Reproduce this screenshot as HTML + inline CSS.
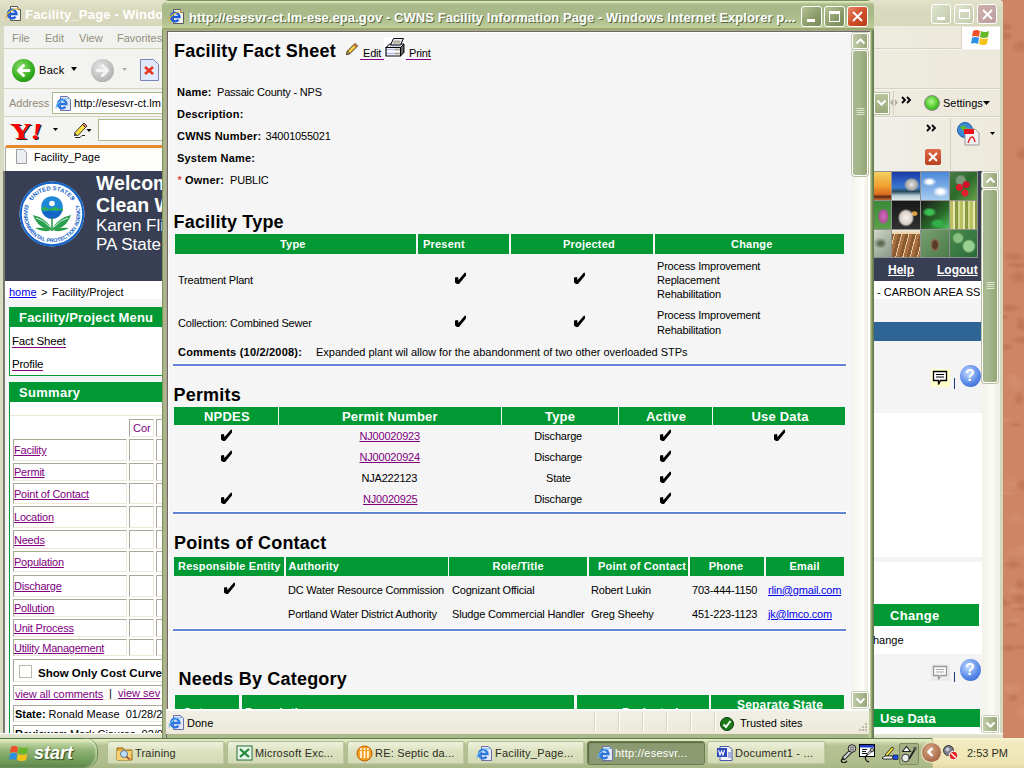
<!DOCTYPE html>
<html><head><meta charset="utf-8">
<style>
*{margin:0;padding:0;box-sizing:border-box}
html,body{width:1024px;height:768px;overflow:hidden}
body{position:relative;background:#cc8464;font-family:"Liberation Sans",sans-serif;font-size:11px;color:#000}
.a{position:absolute}
.t{position:absolute;white-space:nowrap;line-height:1}
.b{font-weight:bold}
#desk{left:1003px;top:0;width:21px;height:738px;background:radial-gradient(ellipse 14px 4px at 7px 606px,rgba(225,160,130,.35),transparent),radial-gradient(ellipse 7px 7px at 19px 485px,rgba(170,95,65,.45),transparent),radial-gradient(ellipse 14px 4px at 15px 265px,rgba(170,95,65,.45),transparent),radial-gradient(ellipse 14px 6px at 15px 553px,rgba(225,160,130,.35),transparent),radial-gradient(ellipse 9px 8px at 20px 154px,rgba(170,95,65,.45),transparent),radial-gradient(ellipse 6px 8px at 16px 399px,rgba(170,95,65,.45),transparent),radial-gradient(ellipse 6px 5px at 5px 605px,rgba(170,95,65,.45),transparent),radial-gradient(ellipse 12px 8px at 8px 484px,rgba(225,160,130,.35),transparent),radial-gradient(ellipse 13px 4px at 12px 590px,rgba(225,160,130,.35),transparent),radial-gradient(ellipse 8px 6px at 3px 36px,rgba(170,95,65,.45),transparent),radial-gradient(ellipse 12px 8px at 8px 688px,rgba(225,160,130,.35),transparent),radial-gradient(ellipse 12px 7px at 13px 519px,rgba(225,160,130,.35),transparent),radial-gradient(ellipse 12px 7px at 17px 599px,rgba(170,95,65,.45),transparent),radial-gradient(ellipse 6px 5px at 10px 698px,rgba(160,85,55,.35),transparent),radial-gradient(ellipse 8px 8px at 21px 712px,rgba(225,160,130,.35),transparent),radial-gradient(ellipse 7px 8px at 17px 585px,rgba(160,85,55,.35),transparent),radial-gradient(ellipse 10px 5px at 6px 648px,rgba(170,95,65,.45),transparent),radial-gradient(ellipse 13px 3px at 2px 493px,rgba(225,160,130,.35),transparent),radial-gradient(ellipse 8px 3px at 2px 420px,rgba(225,160,130,.35),transparent),radial-gradient(ellipse 7px 3px at 13px 425px,rgba(160,85,55,.35),transparent),radial-gradient(ellipse 12px 8px at 19px 46px,rgba(160,85,55,.35),transparent),radial-gradient(ellipse 10px 7px at 10px 564px,rgba(170,95,65,.45),transparent),radial-gradient(ellipse 6px 3px at 1px 317px,rgba(170,95,65,.45),transparent),radial-gradient(ellipse 6px 4px at 19px 548px,rgba(225,160,130,.35),transparent),radial-gradient(ellipse 10px 4px at 9px 625px,rgba(160,85,55,.35),transparent),radial-gradient(ellipse 11px 5px at 1px 347px,rgba(170,95,65,.45),transparent),radial-gradient(ellipse 13px 7px at 12px 385px,rgba(225,160,130,.35),transparent),radial-gradient(ellipse 14px 3px at 20px 609px,rgba(160,85,55,.35),transparent),radial-gradient(ellipse 12px 8px at 16px 277px,rgba(160,85,55,.35),transparent),radial-gradient(ellipse 12px 5px at 7px 308px,rgba(160,85,55,.35),transparent),radial-gradient(ellipse 11px 3px at 9px 561px,rgba(225,160,130,.35),transparent),radial-gradient(ellipse 6px 6px at 18px 322px,rgba(160,85,55,.35),transparent),radial-gradient(ellipse 8px 3px at 18px 647px,rgba(160,85,55,.35),transparent),radial-gradient(ellipse 13px 5px at 20px 340px,rgba(160,85,55,.35),transparent),radial-gradient(ellipse 10px 8px at 11px 623px,rgba(225,160,130,.35),transparent),radial-gradient(ellipse 6px 8px at 0px 603px,rgba(170,95,65,.45),transparent),radial-gradient(ellipse 13px 5px at 11px 257px,rgba(160,85,55,.35),transparent),radial-gradient(ellipse 8px 5px at 19px 327px,rgba(170,95,65,.45),transparent),radial-gradient(ellipse 10px 5px at 10px 378px,rgba(225,160,130,.35),transparent),radial-gradient(ellipse 8px 5px at 3px 27px,rgba(160,85,55,.35),transparent),#cd8565}
#bw{left:0;top:0;width:1003px;height:738px;background:#dcdcc4;border-radius:0 4px 0 0}
#bwtitle{left:0;top:0;width:1003px;height:26px;background:linear-gradient(#e2e3cb,#d8d9bd 40%,#d6d7bb);border-radius:0 4px 0 0}
#popup{left:162px;top:0;width:712px;height:738px;background:linear-gradient(90deg,#7f9060 0,#7f9060 1px,#a4b47f 1px,#adbb88 3px,#b3ae9a 3px,#b3ae9a 4px,#727064 4px,#727064 5px,#a9b789 5px,#a9b789 706px,#c8d49a 708px,#b0c088 709px,#7a9060 710px,#5e7450 712px);border-radius:8px 8px 0 0}
#ptitle{left:162px;top:0;width:712px;height:30px;background:linear-gradient(#7a9060 0,#7a9060 1px,#e0e8c0 1px,#dce6bc 2px,#c0cc9c 3px,#aab988 5px,#a8b888 12px,#b2c290 22px,#bccb96 26px,#c0cc98 27.5px,#98a870 28px,#98a870 30px);border-radius:8px 8px 0 0}
#taskbar{left:0;top:738px;width:1024px;height:30px;background:linear-gradient(#5a7a50 0,#5a7a50 1px,#e4ecc4 1px,#dce6bc 3px,#c8d4a8 5px,#b6c293 8px,#b0bd8c 24px,#a9b686 30px)}
.green{background:#019933;color:#fff;font-weight:bold}
.cell{background:#fff;border:1px solid #ece9d8;border-top-color:#aca899;border-left-color:#aca899}
.tbtn{width:21px;height:21px;border:1px solid #fff;border-radius:3px;background:linear-gradient(135deg,#b8c498,#8a9a68 60%,#7a8a58)}
.sbbtn{width:16px;height:16px;border:1px solid #fff;border-radius:2px;background:linear-gradient(90deg,#c0caa8,#a8b68c 60%,#98a67a);box-shadow:0 0 0 1px #c8ceb4}
.sbthumb{width:16px;border:1px solid #fff;border-radius:3px;background:linear-gradient(90deg,#a8b894,#a4b48a 50%,#92a474);box-shadow:0 0 0 1px #b8c0a0}
.sdiv{top:712px;width:2px;height:19px;border-left:1px solid #d6d2c0;border-right:1px solid #fff}
</style></head><body>
<svg width="0" height="0" style="position:absolute">
<defs>
<symbol id="iedoc" viewBox="0 0 17 17"><path d="M5.5 1.5h7l3 3v11h-10z" fill="#f2f2ee" stroke="#5a5a5a"/><path d="M12.5 1.5v3h3" fill="#fff" stroke="#5a5a5a" stroke-width="0.8"/><path d="M3 9H11.5A4.3 4.3 0 1 0 10.5 11.8" fill="none" stroke="#1d5ad8" stroke-width="2.3"/><path d="M1.2 13.5Q0.5 10 5 6.5T14.5 3.5" fill="none" stroke="#e8b838" stroke-width="1.1"/></symbol>
<symbol id="iedoc2" viewBox="0 0 17 17"><path d="M5.5 1.5h7l3 3v11h-10z" fill="#e4e8f6" stroke="#6a70a8"/><path d="M3 9H11.5A4.3 4.3 0 1 0 10.5 11.8" fill="none" stroke="#2a76e0" stroke-width="2.3"/><path d="M1.2 13.5Q0.5 10 5 6.5T14.5 3.5" fill="none" stroke="#6ab8f0" stroke-width="1.1"/></symbol>
</defs></svg>
<div id="desk" class="a"></div>
<!-- BACKGROUND WINDOW -->
<div id="bw" class="a">
  <div id="bwtitle" class="a"></div>
  <svg class="a" style="left:5px;top:5px" width="17" height="17"><use href="#iedoc"/></svg>
  <div class="t b" style="left:25px;top:8px;font-size:13px;color:#fff;letter-spacing:0.2px">Facility_Page - Windows Internet Explorer</div>
  <!-- title buttons -->
  <div class="a" style="left:931px;top:4px;width:20px;height:20px;border:1px solid #fff;border-radius:3px;background:linear-gradient(135deg,#dfe3cf,#c2cbaa)"><div class="a" style="left:5px;top:12px;width:8px;height:3px;background:#fff"></div></div>
  <div class="a" style="left:954px;top:4px;width:20px;height:20px;border:1px solid #fff;border-radius:3px;background:linear-gradient(135deg,#dfe3cf,#c2cbaa)"><div class="a" style="left:4px;top:4px;width:11px;height:10px;border:1.5px solid #fff;border-top-width:3px"></div></div>
  <div class="a" style="left:977px;top:4px;width:20px;height:20px;border:1px solid #fff;border-radius:3px;background:linear-gradient(135deg,#cdb2b0,#bb9c9a)">
    <svg class="a" style="left:3px;top:3px" width="13" height="13"><path d="M2 2L11 11M11 2L2 11" stroke="#fff" stroke-width="2"/></svg></div>
  <!-- frame body -->
  <div class="a" style="left:4px;top:26px;width:996px;height:708px;background:#f3f3ef"></div>
  <!-- menu bar -->
  <div class="a" style="left:4px;top:26px;width:996px;height:23px;background:linear-gradient(90deg,#f1f3f1 0%,#efefe8 40%,#ede9dc 100%);border-bottom:1px solid #d8d3c0"></div>
  <div class="t" style="left:12px;top:33px;font-size:11px;color:#948e7c">File</div>
  <div class="t" style="left:45px;top:33px;font-size:11px;color:#948e7c">Edit</div>
  <div class="t" style="left:79px;top:33px;font-size:11px;color:#948e7c">View</div>
  <div class="t" style="left:117px;top:33px;font-size:11px;color:#948e7c">Favorites</div>
  <div class="a" style="left:961px;top:27px;width:39px;height:22px;background:#fff;border-left:1px solid #ddd6c4"></div>
  <svg class="a" style="left:971px;top:28px" width="19" height="18" viewBox="0 0 19 18">
    <path d="M2 3q3-2 7 0l-1 6q-4-2-7 0z" fill="#f0502a"/>
    <path d="M10 3q4 2 8 0l-1 6q-4 2-8 0z" fill="#66b82a"/>
    <path d="M1 10q3-2 7 0l-1 6q-4-2-7 0z" fill="#2d8ee5"/>
    <path d="M9 10q4 2 8 0l-1 6q-4 2-8 0z" fill="#f5c21a"/>
  </svg>
  <!-- toolbar -->
  <div class="a" style="left:4px;top:50px;width:996px;height:39px;background:linear-gradient(90deg,#f4f4f2 0%,#f0efe8 50%,#ede9dc 100%);border-bottom:1px solid #d8d3c0"></div>
  <div class="a" style="left:12px;top:59px;width:23px;height:23px;border-radius:50%;background:radial-gradient(circle at 40% 35%,#8fe06a,#2faa1c 60%,#17800e)"></div>
  <svg class="a" style="left:12px;top:59px" width="23" height="23"><path d="M17 11.5H7M11.5 6.5L6.5 11.5L11.5 16.5" stroke="#fff" stroke-width="3" fill="none" stroke-linecap="round" stroke-linejoin="round"/></svg>
  <div class="t" style="left:39px;top:65px;font-size:11px;color:#000;letter-spacing:0.3px">Back</div>
  <svg class="a" style="left:71px;top:67px" width="7" height="4"><path d="M0 0h6l-3 4z" fill="#000"/></svg>
  <div class="a" style="left:91px;top:59px;width:23px;height:23px;border-radius:50%;background:radial-gradient(circle at 40% 35%,#e6e6e6,#b8b8b8 65%,#9a9a9a)"></div>
  <svg class="a" style="left:91px;top:59px" width="23" height="23"><path d="M6 11.5H16M11.5 6.5L16.5 11.5L11.5 16.5" stroke="#f4f4f4" stroke-width="3" fill="none" stroke-linecap="round" stroke-linejoin="round"/></svg>
  <svg class="a" style="left:122px;top:68px" width="6" height="4"><path d="M0 0h5l-2.5 3z" fill="#b0b0a8"/></svg>
  <svg class="a" style="left:139px;top:58px" width="21" height="24"><path d="M1.5 1.5h13l5 5v16h-18z" fill="#dfe9fb" stroke="#7a86b8"/><path d="M6 9l8 7M14 9l-8 7" stroke="#e8341c" stroke-width="2.6"/></svg>
  <!-- address row -->
  <div class="a" style="left:4px;top:90px;width:996px;height:27px;background:linear-gradient(90deg,#f4f4f2 0%,#f0efe8 50%,#ede9dc 100%);border-bottom:1px solid #d8d3c0"></div>
  <div class="t" style="left:9px;top:98px;font-size:11px;color:#8f8a78">Address</div>
  <div class="a" style="left:52px;top:92px;width:120px;height:22px;background:#fff;border:1px solid #a9ba8c"></div>
  <svg class="a" style="left:55px;top:95px" width="17" height="17"><use href="#iedoc2"/></svg>
  <div class="t" style="left:74px;top:98px;font-size:11px;color:#000">http://esesvr-ct.lm</div>
  <!-- right side of address row -->
  <div class="a" style="left:874px;top:93px;width:15px;height:21px;background:linear-gradient(#b9c69d,#9aa878);border:1px solid #fff;outline:1px solid #b8c0a0"></div>
  <svg class="a" style="left:876px;top:99px" width="11" height="8"><path d="M1.5 1.5L5.5 5.5L9.5 1.5" stroke="#fff" stroke-width="2" fill="none"/></svg>
  <svg class="a" style="left:889px;top:98px" width="10" height="9"><path d="M4 1L1 4.5L4 8z M6 1L9 4.5L6 8z" fill="#b0b0a8"/></svg>
  <div class="a" style="left:893px;top:91px;width:1px;height:24px;background:#d6d0bc"></div>
  <svg class="a" style="left:901px;top:96px" width="12" height="8"><path d="M1 1L4 4L1 7M6 1L9 4L6 7" stroke="#000" stroke-width="1.8" fill="none"/></svg>
  <div class="a" style="left:924px;top:95px;width:16px;height:16px;border-radius:50%;background:radial-gradient(circle at 45% 40%,#b8f890,#4cc82a 55%,#2a9a14);border:1.5px solid #8a8a8a"></div>
  <div class="t" style="left:943px;top:98px;font-size:11px;color:#000">Settings</div>
  <svg class="a" style="left:983px;top:101px" width="8" height="5"><path d="M0 0h7l-3.5 4z" fill="#000"/></svg>
  <!-- yahoo row -->
  <div class="a" style="left:4px;top:118px;width:996px;height:27px;background:linear-gradient(90deg,#f4f4f2 0%,#f0efe8 50%,#ede9dc 100%)"></div>
  <div class="t b" style="left:10px;top:119px;font-size:24px;color:#ff0000;font-family:'Liberation Serif',serif;letter-spacing:-1px;text-shadow:1px 1px 0 #222;transform:scaleX(1.25);transform-origin:0 0">Y<i>!</i></div>
  <svg class="a" style="left:53px;top:128px" width="6" height="4"><path d="M0 0h5l-2.5 3z" fill="#000"/></svg>
  <svg class="a" style="left:72px;top:121px" width="20" height="18"><path d="M2.5 12L10.5 3.5l3 3-8 8.5z" fill="#fce040" stroke="#222" stroke-width="0.9"/><path d="M10.5 3.5l1.5-1.5 3 3-1.5 1.5z" fill="#f08060" stroke="#222" stroke-width="0.9"/><path d="M2.5 12l-0.5 3 3-0.5z" fill="#222"/><path d="M3 16.5h5l2-2h3" stroke="#222" stroke-width="1" fill="none"/><path d="M14.5 8h5l-2.5 3z" fill="#000"/></svg>
  <div class="a" style="left:98px;top:119px;width:70px;height:22px;background:#fff;border:1px solid #a9ba8c"></div>
  <!-- right side of yahoo/tab rows -->
  <div class="a" style="left:874px;top:118px;width:126px;height:53px;background:linear-gradient(90deg,#f0efe8 0%,#ede9dc 100%)"></div>
  <div class="a" style="left:950px;top:118px;width:1px;height:52px;background:#fff;border-left:1px solid #d6d0bc"></div>
  <svg class="a" style="left:926px;top:124px" width="11" height="8"><path d="M1 1L4 4L1 7M6 1L9 4L6 7" stroke="#000" stroke-width="1.8" fill="none"/></svg>
  <svg class="a" style="left:956px;top:121px" width="26" height="25"><circle cx="9" cy="9" r="7.5" fill="#3a8ad8" stroke="#1e5aa0"/><path d="M4 6q3-3 6 0t4 4q-3 3-6 1z" fill="#58b830"/><path d="M9 8h10l4 4v12H9z" fill="#f0f0f0" stroke="#999"/><rect x="8" y="8" width="10" height="5" fill="#e8141c"/><path d="M12 22q2-6 4-6t3 5" stroke="#e8141c" stroke-width="1.3" fill="none"/></svg>
  <svg class="a" style="left:990px;top:132px" width="6" height="4"><path d="M0 0h5l-2.5 3z" fill="#000"/></svg>
  <!-- tab strip -->
  <div class="a" style="left:4px;top:145px;width:870px;height:26px;background:linear-gradient(90deg,#f0efe8 0%,#ede9dc 100%)"></div>
  <div class="a" style="left:5px;top:145px;width:170px;height:26px;background:#fdfdfb;border-top:3px solid #e58a2e;border-left:1px solid #aaa;border-radius:3px 3px 0 0"></div>
  <svg class="a" style="left:15px;top:148px" width="13" height="17"><path d="M1.5 1.5h7l3 3v11h-10z" fill="#eceef2" stroke="#9a9ca4"/></svg>
  <div class="t" style="left:34px;top:152px;font-size:11px;color:#000">Facility_Page</div>
  <div class="a" style="left:925px;top:149px;width:16px;height:16px;background:linear-gradient(#e06a48,#b8401e);border-radius:2px"></div>
  <svg class="a" style="left:925px;top:149px" width="16" height="16"><path d="M4 4L12 12M12 4L4 12" stroke="#fff" stroke-width="2.2"/></svg>
  <div class="a" style="left:950px;top:145px;width:1px;height:25px;background:#fff;border-left:1px solid #d6d0bc"></div>
  <!-- page content -->
  <div class="a" style="left:5px;top:171px;width:977px;height:563px;background:#f4f4f4"></div>
  <div class="a" style="left:5px;top:171px;width:977px;height:110px;background:#383f54"></div>
  <!-- EPA logo -->
  <svg class="a" style="left:19px;top:181px" width="66" height="66" viewBox="0 0 66 66">
    <defs><path id="epaTop" d="M10.01 26.84 A23.8 23.8 0 0 1 55.99 26.84"/><path id="epaBot" d="M7.35 21.04 A28.3 28.3 0 1 0 58.65 21.04"/></defs>
    <circle cx="33" cy="33" r="32.5" fill="#fff"/>
    <circle cx="33" cy="33" r="31.3" fill="none" stroke="#1565c8" stroke-width="2.2"/>
    <text font-family="Liberation Sans" font-weight="bold" font-size="5.8" fill="#1565c8" letter-spacing="0.1"><textPath href="#epaTop" startOffset="50%" text-anchor="middle">UNITED STATES</textPath></text>
    <text font-family="Liberation Sans" font-weight="bold" font-size="5.4" fill="#1565c8" letter-spacing="0"><textPath href="#epaBot" startOffset="50%" text-anchor="middle">ENVIRONMENTAL PROTECTION AGENCY</textPath></text>
    <circle cx="11.5" cy="17.5" r="1" fill="#1565c8"/><circle cx="54.5" cy="17.5" r="1" fill="#1565c8"/>
    <circle cx="33" cy="26" r="10.8" fill="#1e88d8"/>
    <path d="M22.3 27q2.7-2 5.4 0t5.4 0 5.4 0 5.4 0v3q-2.7 2-5.4 0t-5.4 0-5.4 0-5.4 0z" fill="#2fb050"/>
    <path d="M22.6 30q2.6 1.5 5.2 0t5.2 0 5.2 0 5.2 0A10.8 10.8 0 0 1 22.6 30z" fill="#1565c8"/>
    <circle cx="33" cy="22.5" r="2.8" fill="#fff"/>
    <path d="M33 37v13" stroke="#2a9a48" stroke-width="1.6"/>
    <path d="M33 49Q28 37 14 34Q19 48 33 49z" fill="#2aa050"/><path d="M31 46Q25 39 17 37" stroke="#fff" stroke-width="0.8" fill="none"/>
    <path d="M33 49Q38 37 52 34Q47 48 33 49z" fill="#2aa050"/><path d="M35 46Q41 39 49 37" stroke="#fff" stroke-width="0.8" fill="none"/>
    <path d="M33 49Q24 46 16 47Q24 52 33 49zM33 49Q42 46 50 47Q42 52 33 49z" fill="#2a9a48"/>
  </svg>
  <div class="t b" style="left:96px;top:174px;font-size:19.5px;color:#fff">Welcome</div>
  <div class="t b" style="left:96px;top:195.5px;font-size:19.5px;color:#fff">Clean W</div>
  <div class="t" style="left:96px;top:217px;font-size:17px;color:#fff">Karen Fli</div>
  <div class="t" style="left:96px;top:235.5px;font-size:17px;color:#fff">PA State</div>
  <!-- breadcrumb -->
  <div class="a" style="left:5px;top:281px;width:977px;height:18px;background:#fff"></div>
  <div class="t" style="left:9px;top:287px;font-size:11px;color:#0000ee;text-decoration:underline">home</div>
  <div class="t" style="left:41px;top:287px;font-size:11px;color:#000">&gt;</div>
  <div class="t" style="left:52px;top:287px;font-size:11px;color:#000">Facility/Project</div>
  <!-- left menu box -->
  <div class="a" style="left:9px;top:307px;width:160px;height:69px;background:#fff;border:1px solid #019933"></div>
  <div class="a green" style="left:9px;top:307px;width:160px;height:20px"></div>
  <div class="t b" style="left:19px;top:311px;font-size:13px;color:#fff;letter-spacing:0.2px">Facility/Project Menu</div>
  <div class="t" style="left:12px;top:335.5px;font-size:11.5px;color:#000;border-bottom:1px solid #800080;padding-bottom:0px;letter-spacing:-0.2px">Fact Sheet</div>
  <div class="t" style="left:12px;top:358.5px;font-size:11.5px;color:#000;border-bottom:1px solid #800080;letter-spacing:-0.2px">Profile</div>
  <!-- summary box -->
  <div class="a" style="left:9px;top:382px;width:160px;height:352px;background:#fff;border-left:1px solid #019933"></div>
  <div class="a green" style="left:9px;top:382px;width:160px;height:20px"></div>
  <div class="t b" style="left:19px;top:386px;font-size:13px;color:#fff;letter-spacing:0.3px">Summary</div>
  <div class="a" style="left:10px;top:415px;width:160px;height:1px;background:#ece9d8"></div>
  <div class="a cell" style="left:129px;top:419px;width:25px;height:18px"></div>
  <div class="t" style="left:133px;top:423px;font-size:11px;color:#800080">Cor</div>
  <div class="a cell" style="left:156px;top:419px;width:20px;height:18px"></div>
  <div class="a cell" style="left:13px;top:439px;width:114px;height:22px"></div>
  <div class="a cell" style="left:129px;top:439px;width:25px;height:22px"></div>
  <div class="a cell" style="left:156px;top:439px;width:20px;height:22px"></div>
  <div class="t" style="left:14px;top:445px;font-size:11px;color:#800080;text-decoration:underline;letter-spacing:-0.22px">Facility</div>
  <div class="a cell" style="left:13px;top:463px;width:114px;height:18px"></div>
  <div class="a cell" style="left:129px;top:463px;width:25px;height:18px"></div>
  <div class="a cell" style="left:156px;top:463px;width:20px;height:18px"></div>
  <div class="t" style="left:14px;top:467px;font-size:11px;color:#800080;text-decoration:underline;letter-spacing:-0.22px">Permit</div>
  <div class="a cell" style="left:13px;top:483px;width:114px;height:21px"></div>
  <div class="a cell" style="left:129px;top:483px;width:25px;height:21px"></div>
  <div class="a cell" style="left:156px;top:483px;width:20px;height:21px"></div>
  <div class="t" style="left:14px;top:489px;font-size:11px;color:#800080;text-decoration:underline;letter-spacing:-0.22px">Point of Contact</div>
  <div class="a cell" style="left:13px;top:506px;width:114px;height:22px"></div>
  <div class="a cell" style="left:129px;top:506px;width:25px;height:22px"></div>
  <div class="a cell" style="left:156px;top:506px;width:20px;height:22px"></div>
  <div class="t" style="left:14px;top:512px;font-size:11px;color:#800080;text-decoration:underline;letter-spacing:-0.22px">Location</div>
  <div class="a cell" style="left:13px;top:530px;width:114px;height:19px"></div>
  <div class="a cell" style="left:129px;top:530px;width:25px;height:19px"></div>
  <div class="a cell" style="left:156px;top:530px;width:20px;height:19px"></div>
  <div class="t" style="left:14px;top:535px;font-size:11px;color:#800080;text-decoration:underline;letter-spacing:-0.22px">Needs</div>
  <div class="a cell" style="left:13px;top:551px;width:114px;height:21px"></div>
  <div class="a cell" style="left:129px;top:551px;width:25px;height:21px"></div>
  <div class="a cell" style="left:156px;top:551px;width:20px;height:21px"></div>
  <div class="t" style="left:14px;top:557px;font-size:11px;color:#800080;text-decoration:underline;letter-spacing:-0.22px">Population</div>
  <div class="a cell" style="left:13px;top:575px;width:114px;height:22px"></div>
  <div class="a cell" style="left:129px;top:575px;width:25px;height:22px"></div>
  <div class="a cell" style="left:156px;top:575px;width:20px;height:22px"></div>
  <div class="t" style="left:14px;top:581px;font-size:11px;color:#800080;text-decoration:underline;letter-spacing:-0.22px">Discharge</div>
  <div class="a cell" style="left:13px;top:599px;width:114px;height:18px"></div>
  <div class="a cell" style="left:129px;top:599px;width:25px;height:18px"></div>
  <div class="a cell" style="left:156px;top:599px;width:20px;height:18px"></div>
  <div class="t" style="left:14px;top:603px;font-size:11px;color:#800080;text-decoration:underline;letter-spacing:-0.22px">Pollution</div>
  <div class="a cell" style="left:13px;top:619px;width:114px;height:18px"></div>
  <div class="a cell" style="left:129px;top:619px;width:25px;height:18px"></div>
  <div class="a cell" style="left:156px;top:619px;width:20px;height:18px"></div>
  <div class="t" style="left:14px;top:623px;font-size:11px;color:#800080;text-decoration:underline;letter-spacing:-0.22px">Unit Process</div>
  <div class="a cell" style="left:13px;top:639px;width:114px;height:17px"></div>
  <div class="a cell" style="left:129px;top:639px;width:25px;height:17px"></div>
  <div class="a cell" style="left:156px;top:639px;width:20px;height:17px"></div>
  <div class="t" style="left:14px;top:643px;font-size:11px;color:#800080;text-decoration:underline;letter-spacing:-0.22px">Utility Management</div>
  <div class="a cell" style="left:13px;top:659px;width:160px;height:23px"></div>
  <div class="a" style="left:19px;top:665px;width:13px;height:13px;border:1px solid #b9b9ad;background:#fff"></div>
  <div class="t b" style="left:38px;top:667.5px;font-size:11.5px;color:#000;letter-spacing:0px">Show Only Cost Curve</div>
  <div class="a cell" style="left:13px;top:685px;width:160px;height:15px"></div>
  <div class="t" style="left:15px;top:688.5px;font-size:11px;color:#800080;text-decoration:underline;letter-spacing:-0.1px">view all comments</div>
  <div class="t" style="left:109px;top:688px;font-size:11px;color:#000">|</div>
  <div class="t" style="left:118px;top:688px;font-size:11px;color:#800080;text-decoration:underline">view sev</div>
  <div class="a cell" style="left:13px;top:705px;width:160px;height:17px"></div>
  <div class="t" style="left:15px;top:709px;font-size:11px;color:#000"><b>State:</b> Ronald Mease&nbsp; 01/28/20</div>
  <div class="a cell" style="left:13px;top:725px;width:160px;height:17px"></div>
  <div class="t" style="left:15px;top:729px;font-size:11px;color:#000"><b>Reviewer:</b> Mark Ciauros&nbsp; 02/0</div>
  <!-- right side page items -->
  <div class="a" style="left:874px;top:171px;width:104px;height:87px;background:#909090"></div>
  <div class="a" style="left:874px;top:172px;width:17px;height:28px;background:linear-gradient(#f2d060 0%,#f0a030 50%,#d86a20 80%,#5a2a10 88%,#c86a30 100%)"></div>
  <div class="a" style="left:892px;top:172px;width:28px;height:28px;background:radial-gradient(ellipse 10px 9px at 70% 45%,#e8e8e8 0%,#a0a0a0 60%,transparent 75%),linear-gradient(#1a3aa8 0%,#3a78d0 55%,#2a4a5a 70%,#b8d0d8 85%,#e0e8e8 100%)"></div>
  <div class="a" style="left:921px;top:172px;width:28px;height:28px;background:radial-gradient(ellipse 8px 5px at 30% 35%,#fff 30%,transparent 90%),radial-gradient(ellipse 9px 6px at 70% 70%,#fff 30%,transparent 90%),linear-gradient(#4a88d8,#a8ccf0)"></div>
  <div class="a" style="left:950px;top:172px;width:27px;height:28px;background:radial-gradient(circle at 35% 55%,#e01a2a 0 3px,transparent 4px),radial-gradient(circle at 60% 45%,#d0102a 0 3px,transparent 4px),radial-gradient(circle at 55% 75%,#e0202a 0 3px,transparent 4px),radial-gradient(circle at 40% 30%,#7a9a7a 0 4px,transparent 6px),linear-gradient(135deg,#4a7a4a,#2a6a2a 50%,#6aa04a)"></div>
  <div class="a" style="left:874px;top:201px;width:17px;height:28px;background:radial-gradient(ellipse 7px 10px at 55% 55%,#d070c0 0%,#b0509a 60%,transparent 80%),linear-gradient(#3a8a3a,#5aa04a)"></div>
  <div class="a" style="left:892px;top:201px;width:28px;height:28px;background:radial-gradient(ellipse 11px 12px at 50% 60%,#f8f4f0 0%,#d8d0c8 55%,transparent 75%),radial-gradient(ellipse 4px 3px at 80% 45%,#e0a040 60%,transparent 90%),linear-gradient(#181818,#303030)"></div>
  <div class="a" style="left:921px;top:201px;width:28px;height:28px;background:radial-gradient(ellipse 9px 6px at 30% 40%,#3ac050 40%,transparent 80%),radial-gradient(ellipse 10px 6px at 60% 80%,#30b048 40%,transparent 80%),linear-gradient(135deg,#1a1a1a,#2a6a2a 60%,#50c060)"></div>
  <div class="a" style="left:950px;top:201px;width:27px;height:28px;background:repeating-linear-gradient(90deg,#b8c060 0 3px,#e8e8b0 3px 5px,#889840 5px 8px,#d0d890 8px 10px)"></div>
  <div class="a" style="left:874px;top:230px;width:17px;height:27px;background:radial-gradient(ellipse 9px 7px at 40% 50%,#5a6a50 20%,#a8b0a0 70%,transparent 90%),linear-gradient(135deg,#d0d8c8,#8a9888)"></div>
  <div class="a" style="left:892px;top:230px;width:28px;height:27px;background:linear-gradient(#f0e8d8 0%,#e8d0a0 15%,transparent 16%),repeating-linear-gradient(105deg,#8a5a30 0 3px,#e8c8a0 3px 4px,#a87040 4px 7px)"></div>
  <div class="a" style="left:921px;top:230px;width:28px;height:27px;background:radial-gradient(ellipse 6px 9px at 50% 55%,#5a3a2a 40%,#8a6a4a 60%,transparent 80%),linear-gradient(135deg,#7aa070,#4a7a48)"></div>
  <div class="a" style="left:950px;top:230px;width:27px;height:27px;background:radial-gradient(circle at 30% 30%,#8ac080 0 4px,transparent 6px),radial-gradient(circle at 70% 60%,#9ad090 0 5px,transparent 7px),linear-gradient(135deg,#4a8a4a,#2a6a3a)"></div>
  <div class="t b" style="left:888px;top:263.5px;font-size:12px;color:#fff;text-decoration:underline">Help</div>
  <div class="t b" style="left:937px;top:263.5px;font-size:12px;color:#fff;text-decoration:underline">Logout</div>
  <div class="a" style="left:874px;top:285px;width:104px;height:14px;background:#fff"></div>
  <div class="t" style="left:877px;top:287px;font-size:11px;color:#000">- CARBON AREA SS</div>
  <div class="a" style="left:874px;top:322px;width:108px;height:19px;background:#2f6497"></div>
  <div class="a" style="left:874px;top:413px;width:108px;height:144px;background:#fff"></div>
  <div class="a" style="left:874px;top:562px;width:108px;height:92px;background:#fff"></div>
  <div class="a green" style="left:874px;top:604px;width:105px;height:22px"></div>
  <div class="t b" style="left:890px;top:609px;font-size:13px;color:#fff;letter-spacing:0.3px">Change</div>
  <div class="t" style="left:873px;top:634.5px;font-size:11px;color:#000">hange</div>
  <div class="a green" style="left:874px;top:709px;width:106px;height:18px"></div>
  <div class="t b" style="left:880px;top:712px;font-size:13px;color:#fff">Use Data</div>
  <div class="a" style="left:874px;top:727px;width:108px;height:7px;background:#fff"></div>
  <div class="a" style="left:931px;top:369px;width:19px;height:18px;background:#ffffcc"></div>
  <svg class="a" style="left:932px;top:370px" width="17" height="17"><path d="M1.5 1.5h13v9h-6l-2 4v-4h-5z" fill="#fff" stroke="#000" stroke-width="1.3"/><path d="M4 4.5h8M4 7h8" stroke="#000" stroke-width="1"/></svg>
  <div class="a" style="left:954px;top:378px;width:1px;height:11px;background:#1a3a7a"></div>
  <div class="a" style="left:960px;top:365px;width:21px;height:22px;border-radius:50%;background:radial-gradient(circle at 40% 35%,#c8dcff,#5a8ae8 55%,#2a5ac8)"></div>
  <div class="t b" style="left:965px;top:368px;font-size:16px;color:#fff">?</div>
  <div class="a" style="left:931px;top:664px;width:19px;height:17px;background:#ebebeb"></div>
  <svg class="a" style="left:932px;top:665px" width="17" height="17"><path d="M1.5 1.5h13v9h-6l-2 4v-4h-5z" fill="#f8f8f8" stroke="#9a9a9a" stroke-width="1.3"/><path d="M4 4.5h8M4 7h8" stroke="#aaa" stroke-width="1"/></svg>
  <div class="a" style="left:954px;top:672px;width:1px;height:10px;background:#1a3a7a"></div>
  <div class="a" style="left:960px;top:659px;width:21px;height:22px;border-radius:50%;background:radial-gradient(circle at 40% 35%,#c8dcff,#5a8ae8 55%,#2a5ac8)"></div>
  <div class="t b" style="left:965px;top:662px;font-size:16px;color:#fff">?</div>
  <!-- right scrollbar -->
  <div class="a" style="left:982px;top:172px;width:17px;height:562px;background:linear-gradient(90deg,#f3f2ea,#fbfbf7 60%,#eeede4)"></div>
  <div class="a sbbtn" style="left:982px;top:172px"><svg width="15" height="15"><path d="M3.5 9.5L7.5 5.5L11.5 9.5" stroke="#fff" stroke-width="2" fill="none"/></svg></div>
  <div class="a sbthumb" style="left:982px;top:189px;height:194px"></div>
  <svg class="a" style="left:986px;top:281px" width="9" height="9"><path d="M0.5 1.5h8M0.5 3.5h8M0.5 5.5h8M0.5 7.5h8" stroke="#dfe6cf" stroke-width="1"/></svg>
  <div class="a sbbtn" style="left:982px;top:716px"><svg width="15" height="15"><path d="M3.5 5.5L7.5 9.5L11.5 5.5" stroke="#fff" stroke-width="2" fill="none"/></svg></div>
  <!-- right frame border -->
  <div class="a" style="left:1000px;top:26px;width:3px;height:712px;background:#d3d6bb"></div>
  <div class="a" style="left:0;top:26px;width:4px;height:712px;background:#d8dbc2"></div>
  <div class="a" style="left:3px;top:171px;width:2px;height:562px;background:#7a7a70"></div>
  <div class="a" style="left:0;top:733px;width:1003px;height:5px;background:linear-gradient(#fff 0,#fff 1px,#e4e6d2 1px,#dcdfc6 5px)"></div>
</div>
<!-- POPUP WINDOW -->
<div id="popup" class="a"></div>
<div id="ptitle" class="a"></div>
<svg class="a" style="left:168px;top:8px" width="17" height="17"><use href="#iedoc"/></svg>
<div class="t b" style="left:189px;top:11px;font-size:13px;color:#fff;text-shadow:1px 1px 0 #5a6840;letter-spacing:0.08px">http://esesvr-ct.lm-ese.epa.gov - CWNS Facility Information Page - Windows Internet Explorer p...</div>
<div class="a tbtn" style="left:801px;top:6px"><div class="a" style="left:5px;top:12px;width:8px;height:3px;background:#fff"></div></div>
<div class="a tbtn" style="left:824px;top:6px"><div class="a" style="left:4px;top:4px;width:11px;height:11px;border:1.5px solid #fff;border-top-width:3px"></div></div>
<div class="a tbtn" style="left:847px;top:6px;background:linear-gradient(135deg,#e8886a,#d0502a 50%,#b83a18)"><svg class="a" style="left:3px;top:3px" width="13" height="13"><path d="M2 2L11 11M11 2L2 11" stroke="#fff" stroke-width="2"/></svg></div>
<div class="a" style="left:166px;top:30px;width:704px;height:680px;background:#aca690"></div>
<div class="a" style="left:167px;top:31px;width:703px;height:679px;background:#6e6c60"></div>
<div id="pc" class="a" style="left:168px;top:32px;width:684px;height:677px;background:#f5f5f5;overflow:hidden;box-shadow:inset 1px 1px 0 #fff">
<div class="t" style="left:6.0px;top:10.1px;font-size:18px;font-weight:bold;color:#000;letter-spacing:0.2px;">Facility Fact Sheet</div>
<svg class="a" style="left:177px;top:10px" width="14" height="14" viewBox="0 0 14 14"><path d="M1.5 12.5L2.5 9L10 1.5L12.5 4L5 11.5z" fill="#f8d048" stroke="#3a2a10" stroke-width="1"/><path d="M1.5 12.5L2.5 9L5 11.5z" fill="#e8c8a0" stroke="#3a2a10" stroke-width="0.8"/><path d="M9 2.5L11.5 5" stroke="#c06030" stroke-width="1.3"/></svg>
<div class="t" style="left:195.0px;top:15.7px;font-size:11px;color:#000;letter-spacing:-0.2px;">Edit</div>
<div class="a" style="left:192px;top:27px;width:24px;height:1px;background:#800080;"></div>
<svg class="a" style="left:216px;top:5px" width="22" height="21" viewBox="0 0 22 21"><rect x="0" y="0" width="22" height="21" fill="#fff"/><path d="M2 10.5L5.5 7H20L16.5 10.5z" fill="#d8d8e8" stroke="#000" stroke-width="1"/><path d="M6.5 8L9.5 1.5H19.5L16.5 8z" fill="#f0f0ff" stroke="#000" stroke-width="1"/><path d="M9.5 4.2h7M9 6h7" stroke="#8a8460" stroke-width="1"/><path d="M2 10.5H16.5V19H2z" fill="#fff" stroke="#000" stroke-width="1.2"/><path d="M3 12.5h12.5M3 16.5h12.5" stroke="#b8b8f0" stroke-width="1.5"/><path d="M11 12.5h4.5M11 16.5h4.5" stroke="#a8a080" stroke-width="1.5"/><path d="M16.5 10.5L20 7V15.5L16.5 19z" fill="#666" stroke="#000" stroke-width="1"/></svg>
<div class="t" style="left:241.0px;top:15.7px;font-size:11px;color:#000;letter-spacing:-0.2px;">Print</div>
<div class="a" style="left:238px;top:27px;width:25px;height:1px;background:#800080;"></div>
<div class="t" style="left:9.0px;top:54.7px;font-size:11px;font-weight:bold;color:#000;letter-spacing:0.2px;">Name:</div>
<div class="t" style="left:49.0px;top:54.7px;font-size:11px;color:#000;letter-spacing:-0.2px;">Passaic County - NPS</div>
<div class="t" style="left:9.0px;top:76.7px;font-size:11px;font-weight:bold;color:#000;letter-spacing:0.2px;">Description:</div>
<div class="t" style="left:9.0px;top:98.7px;font-size:11px;font-weight:bold;color:#000;letter-spacing:0.2px;">CWNS Number:</div>
<div class="t" style="left:97.5px;top:98.7px;font-size:11px;color:#000;letter-spacing:-0.2px;">34001055021</div>
<div class="t" style="left:9.0px;top:120.7px;font-size:11px;font-weight:bold;color:#000;letter-spacing:0.2px;">System Name:</div>
<div class="t" style="left:9.5px;top:142.7px;font-size:11px;color:#e00000;letter-spacing:-0.2px;">*</div>
<div class="t" style="left:17.0px;top:142.7px;font-size:11px;font-weight:bold;color:#000;letter-spacing:0.2px;">Owner:</div>
<div class="t" style="left:62.0px;top:142.7px;font-size:11px;color:#000;letter-spacing:-0.2px;">PUBLIC</div>
<div class="t" style="left:5.5px;top:180.8px;font-size:18px;font-weight:bold;color:#000;letter-spacing:0.2px;">Facility Type</div>
<div class="a" style="left:7px;top:202px;width:241px;height:20px;background:#019933;"></div>
<div class="a" style="left:250px;top:202px;width:91px;height:20px;background:#019933;"></div>
<div class="a" style="left:343px;top:202px;width:142px;height:20px;background:#019933;"></div>
<div class="a" style="left:487px;top:202px;width:189px;height:20px;background:#019933;"></div>
<div class="t" style="left:112.0px;top:206.7px;font-size:11px;font-weight:bold;color:#fff;letter-spacing:0.2px;">Type</div>
<div class="t" style="left:255.0px;top:206.7px;font-size:11px;font-weight:bold;color:#fff;letter-spacing:0.2px;">Present</div>
<div class="t" style="left:395.0px;top:206.7px;font-size:11px;font-weight:bold;color:#fff;letter-spacing:0.2px;">Projected</div>
<div class="t" style="left:563.0px;top:206.7px;font-size:11px;font-weight:bold;color:#fff;letter-spacing:0.2px;">Change</div>
<div class="t" style="left:10.0px;top:242.7px;font-size:11px;color:#000;letter-spacing:-0.2px;">Treatment Plant</div>
<svg class="a" style="left:286px;top:240px" width="13" height="13" viewBox="0 0 13 13"><path d="M1 5.5L4 5L4.5 8L11 0.5L12 1L12 3.5L5 12L3 12L1 10.5Z" fill="#000"/></svg>
<svg class="a" style="left:405px;top:240px" width="13" height="13" viewBox="0 0 13 13"><path d="M1 5.5L4 5L4.5 8L11 0.5L12 1L12 3.5L5 12L3 12L1 10.5Z" fill="#000"/></svg>
<div class="t" style="left:489.0px;top:228.7px;font-size:11px;color:#000;letter-spacing:-0.2px;">Process Improvement</div>
<div class="t" style="left:489.0px;top:242.7px;font-size:11px;color:#000;letter-spacing:-0.2px;">Replacement</div>
<div class="t" style="left:489.0px;top:256.7px;font-size:11px;color:#000;letter-spacing:-0.2px;">Rehabilitation</div>
<div class="t" style="left:10.0px;top:285.7px;font-size:11px;color:#000;letter-spacing:-0.2px;">Collection: Combined Sewer</div>
<svg class="a" style="left:286px;top:283px" width="13" height="13" viewBox="0 0 13 13"><path d="M1 5.5L4 5L4.5 8L11 0.5L12 1L12 3.5L5 12L3 12L1 10.5Z" fill="#000"/></svg>
<svg class="a" style="left:405px;top:283px" width="13" height="13" viewBox="0 0 13 13"><path d="M1 5.5L4 5L4.5 8L11 0.5L12 1L12 3.5L5 12L3 12L1 10.5Z" fill="#000"/></svg>
<div class="t" style="left:489.0px;top:278.2px;font-size:11px;color:#000;letter-spacing:-0.2px;">Process Improvement</div>
<div class="t" style="left:489.0px;top:292.7px;font-size:11px;color:#000;letter-spacing:-0.2px;">Rehabilitation</div>
<div class="t" style="left:10.0px;top:314.7px;font-size:11px;font-weight:bold;color:#000;letter-spacing:0.2px;">Comments (10/2/2008):</div>
<div class="t" style="left:148.0px;top:314.7px;font-size:11px;color:#000;letter-spacing:-0.2px;letter-spacing:-0.02px">Expanded plant wil allow for the abandonment of two other overloaded STPs</div>
<div class="a" style="left:5px;top:331px;width:674px;height:4px;background:#fffff6;"></div>
<div class="a" style="left:5px;top:332px;width:673px;height:2px;background:#6383d9;"></div>
<div class="t" style="left:5.5px;top:354.3px;font-size:18px;font-weight:bold;color:#000;letter-spacing:0.2px;">Permits</div>
<div class="a" style="left:6px;top:375px;width:104px;height:18px;background:#019933;"></div>
<div class="a" style="left:111px;top:375px;width:222px;height:18px;background:#019933;"></div>
<div class="a" style="left:334px;top:375px;width:116px;height:18px;background:#019933;"></div>
<div class="a" style="left:451px;top:375px;width:93px;height:18px;background:#019933;"></div>
<div class="a" style="left:545px;top:375px;width:132px;height:18px;background:#019933;"></div>
<div class="t" style="left:36.0px;top:378.0px;font-size:13px;font-weight:bold;color:#fff;letter-spacing:0.2px;">NPDES</div>
<div class="t" style="left:174.0px;top:378.0px;font-size:13px;font-weight:bold;color:#fff;letter-spacing:0.2px;">Permit Number</div>
<div class="t" style="left:377.0px;top:378.0px;font-size:13px;font-weight:bold;color:#fff;letter-spacing:0.2px;">Type</div>
<div class="t" style="left:478.0px;top:378.0px;font-size:13px;font-weight:bold;color:#fff;letter-spacing:0.2px;">Active</div>
<div class="t" style="left:583.5px;top:378.0px;font-size:13px;font-weight:bold;color:#fff;letter-spacing:0.2px;">Use Data</div>
<div class="t" style="left:191.5px;top:398.7px;font-size:11px;color:#800080;letter-spacing:-0.2px;text-decoration:underline">NJ00020923</div>
<div class="t" style="left:366.3px;top:398.7px;font-size:11px;color:#000;letter-spacing:-0.2px;">Discharge</div>
<svg class="a" style="left:52px;top:396.5px" width="13" height="13" viewBox="0 0 13 13"><path d="M1 5.5L4 5L4.5 8L11 0.5L12 1L12 3.5L5 12L3 12L1 10.5Z" fill="#000"/></svg>
<svg class="a" style="left:491px;top:396.5px" width="13" height="13" viewBox="0 0 13 13"><path d="M1 5.5L4 5L4.5 8L11 0.5L12 1L12 3.5L5 12L3 12L1 10.5Z" fill="#000"/></svg>
<svg class="a" style="left:605px;top:396.5px" width="13" height="13" viewBox="0 0 13 13"><path d="M1 5.5L4 5L4.5 8L11 0.5L12 1L12 3.5L5 12L3 12L1 10.5Z" fill="#000"/></svg>
<div class="t" style="left:191.5px;top:419.7px;font-size:11px;color:#800080;letter-spacing:-0.2px;text-decoration:underline">NJ00020924</div>
<div class="t" style="left:366.3px;top:419.7px;font-size:11px;color:#000;letter-spacing:-0.2px;">Discharge</div>
<svg class="a" style="left:52px;top:417.5px" width="13" height="13" viewBox="0 0 13 13"><path d="M1 5.5L4 5L4.5 8L11 0.5L12 1L12 3.5L5 12L3 12L1 10.5Z" fill="#000"/></svg>
<svg class="a" style="left:491px;top:417.5px" width="13" height="13" viewBox="0 0 13 13"><path d="M1 5.5L4 5L4.5 8L11 0.5L12 1L12 3.5L5 12L3 12L1 10.5Z" fill="#000"/></svg>
<div class="t" style="left:193.5px;top:440.7px;font-size:11px;color:#000;letter-spacing:-0.2px;">NJA222123</div>
<div class="t" style="left:378.0px;top:440.7px;font-size:11px;color:#000;letter-spacing:-0.2px;">State</div>
<svg class="a" style="left:491px;top:438.5px" width="13" height="13" viewBox="0 0 13 13"><path d="M1 5.5L4 5L4.5 8L11 0.5L12 1L12 3.5L5 12L3 12L1 10.5Z" fill="#000"/></svg>
<div class="t" style="left:195.0px;top:461.7px;font-size:11px;color:#800080;letter-spacing:-0.2px;text-decoration:underline">NJ0020925</div>
<div class="t" style="left:366.3px;top:461.7px;font-size:11px;color:#000;letter-spacing:-0.2px;">Discharge</div>
<svg class="a" style="left:52px;top:459.5px" width="13" height="13" viewBox="0 0 13 13"><path d="M1 5.5L4 5L4.5 8L11 0.5L12 1L12 3.5L5 12L3 12L1 10.5Z" fill="#000"/></svg>
<svg class="a" style="left:491px;top:459.5px" width="13" height="13" viewBox="0 0 13 13"><path d="M1 5.5L4 5L4.5 8L11 0.5L12 1L12 3.5L5 12L3 12L1 10.5Z" fill="#000"/></svg>
<div class="a" style="left:5px;top:479px;width:674px;height:4px;background:#fffff6;"></div>
<div class="a" style="left:5px;top:480px;width:673px;height:2px;background:#6383d9;"></div>
<div class="t" style="left:6.0px;top:502.3px;font-size:18px;font-weight:bold;color:#000;letter-spacing:0.2px;">Points of Contact</div>
<div class="a" style="left:6px;top:525px;width:110px;height:19px;background:#019933;"></div>
<div class="a" style="left:118px;top:525px;width:162px;height:19px;background:#019933;"></div>
<div class="a" style="left:281px;top:525px;width:138px;height:19px;background:#019933;"></div>
<div class="a" style="left:421px;top:525px;width:99px;height:19px;background:#019933;"></div>
<div class="a" style="left:522px;top:525px;width:74px;height:19px;background:#019933;"></div>
<div class="a" style="left:598px;top:525px;width:78px;height:19px;background:#019933;"></div>
<div class="t" style="left:10.0px;top:528.7px;font-size:11px;font-weight:bold;color:#fff;letter-spacing:0.2px;">Responsible Entity</div>
<div class="t" style="left:120.5px;top:528.7px;font-size:11px;font-weight:bold;color:#fff;letter-spacing:0.2px;">Authority</div>
<div class="t" style="left:324.5px;top:528.7px;font-size:11px;font-weight:bold;color:#fff;letter-spacing:0.2px;">Role/Title</div>
<div class="t" style="left:430.0px;top:528.7px;font-size:11px;font-weight:bold;color:#fff;letter-spacing:0.2px;">Point of Contact</div>
<div class="t" style="left:540.7px;top:528.7px;font-size:11px;font-weight:bold;color:#fff;letter-spacing:0.2px;">Phone</div>
<div class="t" style="left:621.5px;top:528.7px;font-size:11px;font-weight:bold;color:#fff;letter-spacing:0.2px;">Email</div>
<svg class="a" style="left:55px;top:550px" width="13" height="13" viewBox="0 0 13 13"><path d="M1 5.5L4 5L4.5 8L11 0.5L12 1L12 3.5L5 12L3 12L1 10.5Z" fill="#000"/></svg>
<div class="t" style="left:120.0px;top:552.7px;font-size:11px;color:#000;letter-spacing:-0.2px;">DC Water Resource Commission</div>
<div class="t" style="left:284.0px;top:552.7px;font-size:11px;color:#000;letter-spacing:-0.2px;">Cognizant Official</div>
<div class="t" style="left:423.0px;top:552.7px;font-size:11px;color:#000;letter-spacing:-0.2px;">Robert Lukin</div>
<div class="t" style="left:524.0px;top:552.7px;font-size:11px;color:#000;letter-spacing:-0.2px;">703-444-1150</div>
<div class="t" style="left:600.0px;top:552.7px;font-size:11px;color:#0000ee;letter-spacing:-0.2px;text-decoration:underline">rlin@gmail.com</div>
<div class="t" style="left:120.0px;top:576.7px;font-size:11px;color:#000;letter-spacing:-0.2px;">Portland Water District Authority</div>
<div class="t" style="left:284.0px;top:576.7px;font-size:11px;color:#000;letter-spacing:-0.2px;">Sludge Commercial Handler</div>
<div class="t" style="left:423.0px;top:576.7px;font-size:11px;color:#000;letter-spacing:-0.2px;">Greg Sheehy</div>
<div class="t" style="left:524.0px;top:576.7px;font-size:11px;color:#000;letter-spacing:-0.2px;">451-223-1123</div>
<div class="t" style="left:600.0px;top:576.7px;font-size:11px;color:#0000ee;letter-spacing:-0.2px;text-decoration:underline">jk@lmco.com</div>
<div class="a" style="left:5px;top:596px;width:674px;height:4px;background:#fffff6;"></div>
<div class="a" style="left:5px;top:597px;width:673px;height:2px;background:#6383d9;"></div>
<div class="t" style="left:10.5px;top:638.4px;font-size:18px;font-weight:bold;color:#000;letter-spacing:0.2px;">Needs By Category</div>
<div class="a" style="left:7px;top:663px;width:64px;height:25px;background:#019933;"></div>
<div class="a" style="left:74px;top:663px;width:332px;height:25px;background:#019933;"></div>
<div class="a" style="left:409px;top:663px;width:132px;height:25px;background:#019933;"></div>
<div class="a" style="left:543px;top:663px;width:133px;height:25px;background:#019933;"></div>
<div class="t" style="left:569.0px;top:667.3px;font-size:12px;font-weight:bold;color:#fff;letter-spacing:0.2px;">Separate State</div>
<div class="t" style="left:15.0px;top:674.8px;font-size:12px;font-weight:bold;color:#fff;letter-spacing:0.2px;">Category</div>
<div class="t" style="left:77.0px;top:674.8px;font-size:12px;font-weight:bold;color:#fff;letter-spacing:0.2px;">Description</div>
<div class="t" style="left:454.0px;top:674.8px;font-size:12px;font-weight:bold;color:#fff;letter-spacing:0.2px;">Projected</div>
</div>
<!-- popup scrollbar -->
<div class="a" style="left:852px;top:32px;width:18px;height:677px;background:linear-gradient(90deg,#f3f2ea,#fdfdfa 60%,#eeede4 88%,#fff 89%)"></div>
<div class="a sbbtn" style="left:852px;top:33px"><svg width="15" height="15"><path d="M3.5 9.5L7.5 5.5L11.5 9.5" stroke="#fff" stroke-width="2" fill="none"/></svg></div>
<div class="a sbthumb" style="left:852px;top:50px;height:126px"></div>
<svg class="a" style="left:856px;top:107px" width="9" height="9"><path d="M0.5 1.5h8M0.5 3.5h8M0.5 5.5h8M0.5 7.5h8" stroke="#dfe6cf" stroke-width="1"/></svg>
<div class="a sbbtn" style="left:852px;top:692px"><svg width="15" height="15"><path d="M3.5 5.5L7.5 9.5L11.5 5.5" stroke="#fff" stroke-width="2" fill="none"/></svg></div>
<!-- status bar -->
<div class="a" style="left:166px;top:709px;width:703px;height:25px;background:linear-gradient(#fff 0,#fff 1px,#f2f0e6 2px,#ece9d8 100%)"></div>
<svg class="a" style="left:168px;top:714px" width="17" height="17"><use href="#iedoc2"/></svg>
<div class="t" style="left:187px;top:718px;font-size:11px;color:#000">Done</div>
<div class="a sdiv" style="left:594px"></div>
<div class="a sdiv" style="left:618px"></div>
<div class="a sdiv" style="left:642px"></div>
<div class="a sdiv" style="left:666px"></div>
<div class="a sdiv" style="left:690px"></div>
<div class="a sdiv" style="left:714px"></div>
<div class="a" style="left:720px;top:717px;width:14px;height:14px;border-radius:50%;background:#1a7a1a;border:1px solid #0a3a0a"></div>
<svg class="a" style="left:720px;top:717px" width="14" height="14"><path d="M3.5 7.5L6 10L10.5 4" stroke="#fff" stroke-width="2" fill="none"/></svg>
<div class="t" style="left:740px;top:718px;font-size:11px;color:#000">Trusted sites</div>
<svg class="a" style="left:858px;top:722px" width="10" height="10"><g fill="#c0bca8"><rect x="7" y="1" width="2" height="2"/><rect x="4" y="4" width="2" height="2"/><rect x="7" y="4" width="2" height="2"/><rect x="1" y="7" width="2" height="2"/><rect x="4" y="7" width="2" height="2"/><rect x="7" y="7" width="2" height="2"/></g></svg>
<!-- TASKBAR -->
<div id="taskbar" class="a"></div>
<div class="a" style="left:0;top:738px;width:97px;height:30px;border-radius:0 13px 13px 0;background:linear-gradient(#3c6a30 0,#3c6a30 1px,#e4eec0 1px,#d8e6b4 3px,#b8d09c 6px,#94b478 12px,#7aa462 19px,#6c9656 25px,#5a8048 30px);box-shadow:inset -2px 0 2px rgba(235,245,210,.45),1px 0 0 #6a8a58"></div>
<svg class="a" style="left:9px;top:744px" width="21" height="19" viewBox="0 0 21 19">
  <path d="M2 3q3-2 7 0l-1 6q-4-2-7 0z" fill="#f0502a"/>
  <path d="M10 3q4 2 9 0l-1 6q-4 2-9 0z" fill="#66b82a"/>
  <path d="M1 10q3-2 7 0l-1 6q-4-2-7 0z" fill="#2d8ee5"/>
  <path d="M9 10q4 2 9 0l-1 6q-4 2-9 0z" fill="#f5c21a"/>
</svg>
<div class="t b" style="left:34px;top:744px;font-size:18px;color:#fff;font-style:italic;text-shadow:1px 1px 1px #2a4a1a">start</div>
<div class="a" style="left:107px;top:741px;width:118px;height:24px;background:linear-gradient(#eef1dc,#dde3c2 40%,#d2d9b4);border:1px solid #b2bc92;border-radius:3px;box-shadow:inset -1px -1px 0 #c0c8a0"></div>
<svg class="a" style="left:116px;top:745px" width="17" height="16"><path d="M1 3h6l1 2h8v10H1z" fill="#e8b040" stroke="#9a6a10"/><path d="M1 6h15l-2 9H1z" fill="#f8d070"/><circle cx="8" cy="9" r="3.5" fill="#bfe0f8" stroke="#5a7a9a"/><path d="M10.5 11.5l3 3" stroke="#8a3a3a" stroke-width="1.5"/></svg>
<div class="t" style="left:135px;top:747.5px;font-size:11px;color:#2c2c1c;letter-spacing:0.2px">Training</div>
<div class="a" style="left:227px;top:741px;width:118px;height:24px;background:linear-gradient(#eef1dc,#dde3c2 40%,#d2d9b4);border:1px solid #b2bc92;border-radius:3px;box-shadow:inset -1px -1px 0 #c0c8a0"></div>
<svg class="a" style="left:236px;top:745px" width="17" height="16"><rect x="1" y="1" width="15" height="14" fill="#fff" stroke="#1a6a2a"/><rect x="2" y="2" width="13" height="12" fill="#e8f4e8"/><path d="M4 4l9 8M13 4l-9 8" stroke="#1a8a3a" stroke-width="2.2"/></svg>
<div class="t" style="left:255px;top:747.5px;font-size:11px;color:#2c2c1c;letter-spacing:0.2px">Microsoft Exc...</div>
<div class="a" style="left:347px;top:741px;width:118px;height:24px;background:linear-gradient(#eef1dc,#dde3c2 40%,#d2d9b4);border:1px solid #b2bc92;border-radius:3px;box-shadow:inset -1px -1px 0 #c0c8a0"></div>
<svg class="a" style="left:356px;top:745px" width="17" height="17"><circle cx="8.5" cy="8.5" r="7.5" fill="#f8a020" stroke="#c05a00"/><path d="M5 6v7M8.5 6v7M12 6v7" stroke="#fff" stroke-width="1.6"/><circle cx="5" cy="4" r="1" fill="#fff"/><circle cx="8.5" cy="4" r="1" fill="#fff"/><circle cx="12" cy="4" r="1" fill="#fff"/></svg>
<div class="t" style="left:375px;top:747.5px;font-size:11px;color:#2c2c1c;letter-spacing:0.2px">RE: Septic da...</div>
<div class="a" style="left:467px;top:741px;width:118px;height:24px;background:linear-gradient(#eef1dc,#dde3c2 40%,#d2d9b4);border:1px solid #b2bc92;border-radius:3px;box-shadow:inset -1px -1px 0 #c0c8a0"></div>
<svg class="a" style="left:476px;top:745px" width="17" height="17"><use href="#iedoc2"/></svg>
<div class="t" style="left:495px;top:747.5px;font-size:11px;color:#2c2c1c;letter-spacing:0.2px">Facility_Page...</div>
<div class="a" style="left:587px;top:741px;width:118px;height:24px;background:#8c9a72;border:1px solid #6c7a52;border-radius:3px;box-shadow:inset 1px 1px 1px #5a6842"></div>
<svg class="a" style="left:597px;top:745px" width="17" height="17"><use href="#iedoc2"/></svg>
<div class="t" style="left:615px;top:747.5px;font-size:11px;color:#fff;letter-spacing:0.25px">http://esesvr...</div>
<div class="a" style="left:707px;top:741px;width:119px;height:24px;background:linear-gradient(#eef1dc,#dde3c2 40%,#d2d9b4);border:1px solid #b2bc92;border-radius:3px;box-shadow:inset -1px -1px 0 #c0c8a0"></div>
<svg class="a" style="left:716px;top:745px" width="17" height="17"><path d="M4 1.5h9l3 3v11H4z" fill="#f4f4fc" stroke="#4a5aa8"/><rect x="1" y="3" width="10" height="9" fill="#2a4ab8"/><path d="M2.5 5l1.5 5 1.5-4 1.5 4 1.5-5" stroke="#fff" stroke-width="1.1" fill="none"/><path d="M12 8h3M12 10h3M12 12h3" stroke="#5a6ac8"/></svg>
<div class="t" style="left:735px;top:747.5px;font-size:11px;color:#2c2c1c;letter-spacing:0.2px">Document1 - ...</div>
<!-- quick tray icons -->
<svg class="a" style="left:839px;top:743px" width="18" height="20" viewBox="0 0 18 20"><path d="M12.5 7.5L5 15" stroke="#222" stroke-width="4" stroke-linecap="round"/><path d="M12.5 7.5L5 15" stroke="#d8d8d8" stroke-width="2.2" stroke-linecap="round"/><circle cx="13" cy="5.5" r="3.8" fill="#c8c8c8" stroke="#222" stroke-width="1"/><path d="M11 4.5h4M11 6.5h4M12 3v5M14 3v5" stroke="#777" stroke-width="0.7"/><path d="M5 15Q1 17 3 19T8 18" stroke="#111" stroke-width="1.2" fill="none"/></svg>
<svg class="a" style="left:859px;top:744px" width="17" height="19" viewBox="0 0 17 19"><rect x="0.5" y="0.5" width="15" height="12" fill="#fff" stroke="#000"/><rect x="1" y="1" width="14" height="2.5" fill="#1a3ad0"/><path d="M3 5.5h5M3 7.5h4M3 9.5h5" stroke="#111" stroke-width="1"/><path d="M13 6l-4 4" stroke="#111" stroke-width="2.4"/><path d="M13 6l-4 4" stroke="#ddd" stroke-width="1.2"/><circle cx="13" cy="6" r="1.8" fill="#bbb" stroke="#111" stroke-width="0.8"/><path d="M9 10Q5 13 7 16T10 17" stroke="#111" stroke-width="1.2" fill="none"/></svg>
<svg class="a" style="left:881px;top:745px" width="18" height="17" viewBox="0 0 18 17"><path d="M4 10L11 2l2 1.5-7 8z" fill="#f8e040" stroke="#222" stroke-width="0.9"/><path d="M1 13q3-3 6-2l4 0q2 1 0 3H2z" fill="#fff" stroke="#111" stroke-width="0.9"/><rect x="12" y="10" width="5" height="4.5" fill="#1a4ae8" stroke="#111" stroke-width="0.6"/></svg>
<div class="a" style="left:899px;top:743px;width:20px;height:22px;background:#a4b184;border:1px solid #7e8c60;border-radius:2px"></div>
<svg class="a" style="left:900px;top:744px" width="18" height="20" viewBox="0 0 18 20"><path d="M2.5 7.5l4-5 4 5z" fill="#fff" stroke="#222" stroke-width="1.1"/><circle cx="5.5" cy="14" r="3.8" fill="#eee" stroke="#333" stroke-width="1"/><path d="M9 15l6-10" stroke="#222" stroke-width="1.8"/><rect x="13.5" y="3" width="3" height="3" fill="#555"/></svg>
<div class="a" style="left:932px;top:738px;width:92px;height:30px;background:linear-gradient(#f9f3d2 0,#f2eac0 4px,#ede3b2 26px,#e2d8a4 30px);border-left:1px solid #c8c090"></div>
<div class="a" style="left:922px;top:743px;width:19px;height:19px;border-radius:50%;background:radial-gradient(circle at 40% 35%,#d8a888,#a86a48 70%,#8a5030);box-shadow:0 0 0 1px #f0e6c8"></div>
<svg class="a" style="left:924px;top:745px" width="14" height="14"><path d="M8.5 3L4.5 7L8.5 11" stroke="#fff" stroke-width="2.4" fill="none"/></svg>
<svg class="a" style="left:942px;top:744px" width="17" height="17"><circle cx="6.5" cy="6.5" r="5" fill="#7a7e8a" stroke="#333"/><circle cx="5.5" cy="5.5" r="2" fill="#c8ccd8"/><circle cx="11.5" cy="11.5" r="4.3" fill="#e82020" stroke="#fff"/><path d="M9 9l5 5" stroke="#fff" stroke-width="1.4"/></svg>
<div class="t" style="left:967px;top:748px;font-size:11px;color:#2e2e1e">2:53 PM</div>
</body></html>
